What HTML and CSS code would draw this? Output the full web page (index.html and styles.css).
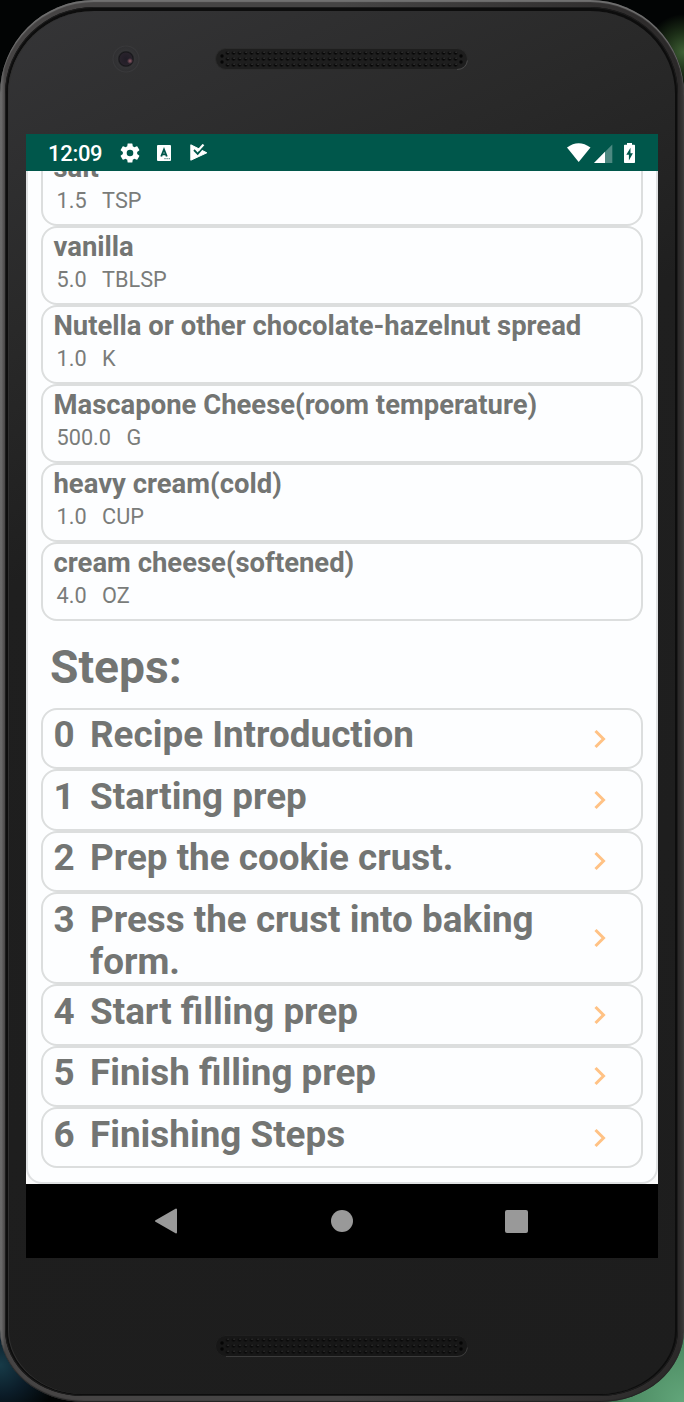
FILE: index.html
```html
<!DOCTYPE html>
<html lang="en">
<head>
<meta charset="utf-8">
<title>Recipe details</title>
<link rel="stylesheet" href="styles.css">
</head>
<body>
<div class="phone"><div class="groove"><div class="face">
  <header class="bezel top">
    <span class="camera"></span>
    <svg class="grille" width="253" height="22" viewBox="0 0 253 22"><defs><pattern id="d" x="9.5" y="2" width="6" height="6" patternUnits="userSpaceOnUse"><circle cx="3" cy="3" r="1.7" fill="#060606"/><circle cx="3.5" cy="2.2" r=".7" fill="#484848"/></pattern></defs><rect x=".5" y=".5" width="252" height="21" rx="10.5" fill="#1e1e1e" stroke="#2c2c2c"/><path d="M242 21.500q9 0 10.500-9" fill="none" stroke="#484848"/><rect x="9.5" y="2" width="234" height="18" fill="url(#d)"/><g fill="#060606"><circle cx="7" cy="8" r="1.7"/><circle cx="7" cy="14" r="1.7"/><circle cx="246" cy="8" r="1.7"/><circle cx="246" cy="14" r="1.7"/></g></svg>
  </header>
  <main class="screen">
    <div class="status">
      <span class="time">12:09</span>
      <svg class="gear" width="20" height="20" viewBox="2 2 20 20"><path fill="#fff" d="M19.14 12.94c.04-.3.06-.61.06-.94 0-.32-.02-.64-.07-.94l2.03-1.58a.49.49 0 0 0 .12-.61l-1.92-3.32a.488.488 0 0 0-.59-.22l-2.39.96c-.5-.38-1.03-.7-1.62-.94l-.36-2.54a.484.484 0 0 0-.48-.41h-3.84c-.24 0-.43.17-.47.41l-.36 2.54c-.59.24-1.13.57-1.62.94l-2.39-.96c-.22-.08-.47 0-.59.22L2.74 8.87c-.12.21-.08.47.12.61l2.03 1.58c-.05.3-.09.63-.09.94s.02.64.07.94l-2.03 1.58a.49.49 0 0 0-.12.61l1.92 3.32c.12.22.37.29.59.22l2.39-.96c.5.38 1.03.7 1.62.94l.36 2.54c.05.24.24.41.48.41h3.84c.24 0 .44-.17.47-.41l.36-2.54c.59-.24 1.13-.56 1.62-.94l2.39.96c.22.08.47 0 .59-.22l1.92-3.32c.12-.22.07-.47-.12-.61l-2.01-1.58zM12 15.3a3.3 3.3 0 1 1 0-6.6 3.3 3.3 0 0 1 0 6.6z"/></svg>
      <svg class="letter" width="14" height="16" viewBox="0 0 14 16"><rect width="14" height="16" rx="1" fill="#fff"/><path d="M4.200 11.500 7 4.500l2.800 7M5 9.400h4" fill="none" stroke="#00574b" stroke-width="1.9"/><path d="M7.500 13.700h1M9.600 13.700h1M11.700 13.700h1" stroke="#00574b"/></svg>
      <svg class="play" width="18" height="17" viewBox="0 0 18 17"><path fill="#fff" stroke="#fff" stroke-linejoin="round" d="M.8.8 16.800 8.800.8 16.200z"/><path d="m4 6 3.700 3.800L14.500 1.800" fill="none" stroke="#00574b" stroke-width="1.800"/><path d="M8.300 6.200 13.500.6" fill="none" stroke="#fff" stroke-width="2.200"/></svg>
      <svg class="signals" width="70" height="22" viewBox="566 141 70 22"><path fill="#fff" d="M567 146.500q11.500-8.500 23.500 0L578.700 161z"/><path fill="#fff" fill-opacity=".3" d="M612.300 143.500V162H594z"/><path fill="#fff" d="M605 150.800V162h-11z"/><path fill="#fff" d="M627 142h5v1.800h2.200q.8 0 .8.800v16.600q0 .8-.8.800h-9.400q-.8 0-.8-.8v-16.600q0-.8.8-.8h2.200z"/><path fill="#00574b" d="M630.500 146.800l-4.200 7h2.600v5.600l4-7.200h-2.400z"/></svg>
    </div>
    <div class="scroll">
      <section class="sheet">
        <ul class="ingredients">
          <li><b>salt</b><p><span>1.5</span><span>TSP</span></p></li>
          <li><b>vanilla</b><p><span>5.0</span><span>TBLSP</span></p></li>
          <li><b>Nutella or other chocolate-hazelnut spread</b><p><span>1.0</span><span>K</span></p></li>
          <li><b>Mascapone Cheese(room temperature)</b><p><span>500.0</span><span>G</span></p></li>
          <li><b>heavy cream(cold)</b><p><span>1.0</span><span>CUP</span></p></li>
          <li><b>cream cheese(softened)</b><p><span>4.0</span><span>OZ</span></p></li>
        </ul>
        <h1>Steps:</h1>
        <ol class="steps">
          <li><span class="num">0</span><span class="name">Recipe Introduction</span><svg class="chev" viewBox="0 0 12 20"><path d="m1.500 2 8 8-8 8"/></svg></li>
          <li><span class="num">1</span><span class="name">Starting prep</span><svg class="chev" viewBox="0 0 12 20"><path d="m1.500 2 8 8-8 8"/></svg></li>
          <li><span class="num">2</span><span class="name">Prep the cookie crust.</span><svg class="chev" viewBox="0 0 12 20"><path d="m1.500 2 8 8-8 8"/></svg></li>
          <li class="tall"><span class="num">3</span><span class="name">Press the crust into baking<br>form.</span><svg class="chev" viewBox="0 0 12 20"><path d="m1.500 2 8 8-8 8"/></svg></li>
          <li><span class="num">4</span><span class="name">Start filling prep</span><svg class="chev" viewBox="0 0 12 20"><path d="m1.500 2 8 8-8 8"/></svg></li>
          <li><span class="num">5</span><span class="name">Finish filling prep</span><svg class="chev" viewBox="0 0 12 20"><path d="m1.500 2 8 8-8 8"/></svg></li>
          <li><span class="num">6</span><span class="name">Finishing Steps</span><svg class="chev" viewBox="0 0 12 20"><path d="m1.500 2 8 8-8 8"/></svg></li>
        </ol>
      </section>
    </div>
    <nav>
      <svg class="back" width="22" height="26" viewBox="0 0 22 26"><path fill="#999" stroke="#999" stroke-width="2" stroke-linejoin="round" d="M21 1.500v23L1 13z"/></svg>
      <span class="home"></span>
      <span class="recent"></span>
    </nav>
  </main>
  <footer class="bezel bottom">
    <svg class="grille" width="253" height="22" viewBox="0 0 253 22"><rect x=".5" y=".5" width="252" height="21" rx="10.5" fill="#171717" stroke="#202020"/><path d="M11 21.500h231q9 0 10.500-9" fill="none" stroke="#3b3b3b"/><rect x="9.5" y="2" width="234" height="18" fill="url(#d)" opacity=".8"/><g fill="#050505"><circle cx="7" cy="8" r="1.7"/><circle cx="7" cy="14" r="1.7"/><circle cx="246" cy="8" r="1.7"/><circle cx="246" cy="14" r="1.7"/></g></svg>
  </footer>
</div></div></div>
</body>
</html>
```
FILE: styles.css
```css
* { box-sizing: border-box; margin: 0; padding: 0; }
body {
  width: 684px; height: 1402px; overflow: hidden;
  font-family: Roboto, sans-serif; color: #737573;
  background:
    radial-gradient(circle at 684px 52px, #3f6035 0, #1c2e17 20px, transparent 38px),
    radial-gradient(circle at 684px 1402px, #62a67a 0, #4c8a62 60px, transparent 110px),
    radial-gradient(circle at 0 1365px, #173b48 0, #0b1c28 30px, transparent 60px),
    #020404;
}
.phone {
  height: 1402px; padding: 7px 6px 6px 5px;
  border-radius: 94px 94px 84px 84px / 94px 94px 72px 72px;
  background: linear-gradient(to right, #777 0, #464444 5px, #454444 50%, #2b2929 679px, #3c3a3a);
  box-shadow: inset 0 2px 1px #707070, inset 0 -1px 1px #222;
}
.groove {
  height: 1389px; padding: 4px 3px 2px;
  border-radius: 89px 88px 79px 78px / 87px 87px 66px 66px;
  background: #0d0d0d;
  box-shadow: inset 0 0 0 1px #1c1c1c;
}
.face {
  height: 1383px; padding: 0 17px 0 18px;
  border-radius: 86px 85px 76px 75px / 83px 83px 64px 64px;
  background: linear-gradient(155deg, #353537 0, #292929 19%, #1f1f1f 34%, #1d1d1d 100%);
  box-shadow: inset 1px 0 #303030;
}
.bezel { display: flex; align-items: flex-start; }
.top { height: 123px; padding: 34px 0 0 86px; }
.bottom { height: 136px; padding: 77px 0 0 189px; }
.camera {
  width: 28px; height: 28px; margin-right: 75px; border-radius: 50%;
  background: radial-gradient(circle at 18px 16px, #96606a 0, #4a333e 2px, transparent 3px),
    radial-gradient(circle, #201c26 0, #28222b 6px, #17171a 7px, #343436 8.5px, #303032 12px, #39393b 13px, transparent 14px);
}
.top .grille { margin-top: 3px; }
.screen { width: 632px; height: 1124px; display: flex; flex-direction: column; background: #fff; }
.status { height: 37px; flex: none; display: flex; align-items: center; padding-left: 22px; background: #00574b; }
.time { width: 72px; color: #fff; font-size: 22px; font-weight: 500; line-height: 26px; padding-top: 2px; letter-spacing: -.3px; }
.letter { margin-left: 17px; }
.play { margin-left: 19px; }
.signals { margin: 0 22px 0 auto; }
.scroll { height: 1013px; overflow: hidden; display: flex; flex-direction: column; justify-content: flex-end; background: #fafafa; }
.sheet {
  flex: none; padding: 14px 13px 13.600px;
  border: 2px solid #dfe1e2; border-radius: 16px; background: #fdfeff;
}
ul, ol { list-style: none; }
li { border: 2px solid #dcdede; border-radius: 16px; }
.ingredients li { height: 79px; padding: 3px 10px 0 10.500px; }
.ingredients b { display: block; font-size: 27.450px; font-weight: 700; line-height: 32px; white-space: nowrap; }
.ingredients p { display: flex; gap: 15.500px; padding: 1.500px 3px 0; font-size: 21.700px; line-height: 30px; color: #7a7c7a; }
h1 { height: 86.500px; padding: 18px 0 0 9px; font-size: 46.200px; line-height: 56px; font-weight: 700; }
.steps li {
  height: 61.4px; display: flex; align-items: center; padding: 0 35px 0 10.500px;
  font-size: 36.850px; font-weight: 700; line-height: 42.500px;
}
.steps .tall { height: 92.2px; }
.num, .name { align-self: flex-start; padding-top: 4.500px; white-space: nowrap; }
.tall .num, .tall .name { height: 88px; }
.num { width: 36.500px; }
.chev { width: 12px; height: 20px; margin-left: auto; fill: none; stroke: #ffc285; stroke-width: 3; }
nav { height: 74px; flex: none; display: flex; align-items: center; padding-left: 129px; background: #000; }
.home { width: 22px; height: 22px; margin-left: 154px; border-radius: 50%; background: #999; }
.recent { width: 23px; height: 23px; margin-left: 152px; border-radius: 2px; background: #999; }
```
